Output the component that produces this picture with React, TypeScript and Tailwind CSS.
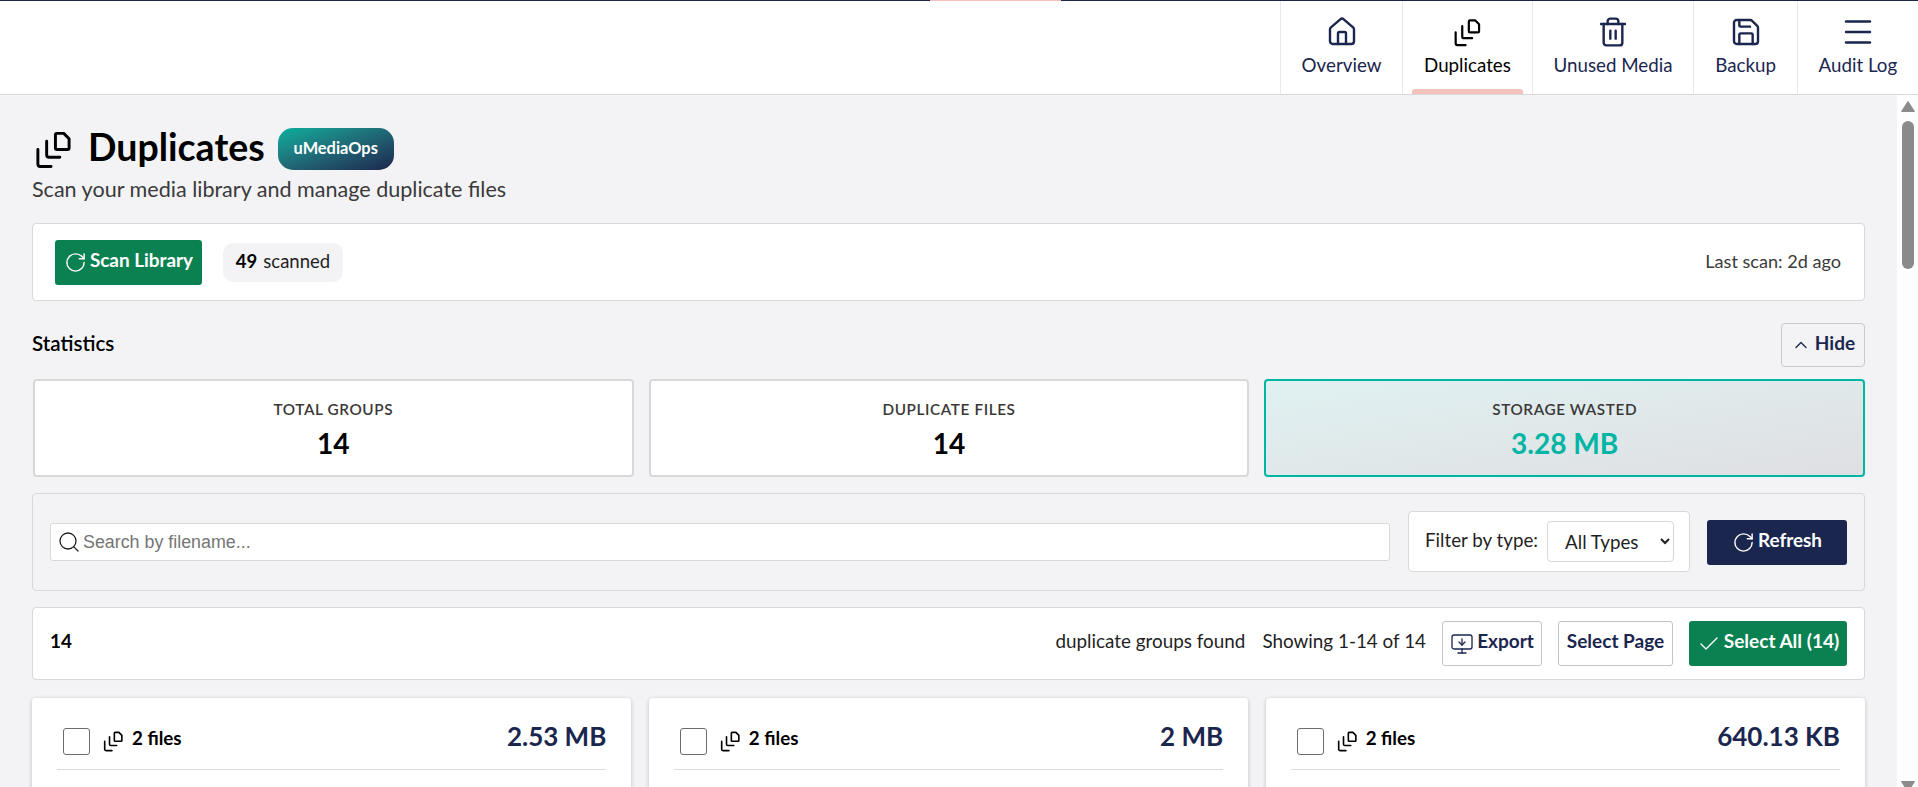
import { ChevronUp, Check, House, Menu, MonitorDown, RotateCw, Save, Search, Trash2 } from "lucide-react";
import type { ReactNode } from "react";

function DocsIcon({ className }: { className: string }) {
  return (
    <svg viewBox="0 0 40 41" fill="none" stroke="currentColor" strokeWidth="3" strokeLinecap="round" strokeLinejoin="round" className={className}>
      <path d="M24 4.5h7l5.5 5.5v9.5a1.5 1.5 0 0 1-1.5 1.5H24a1.5 1.5 0 0 1-1.5-1.5V6A1.5 1.5 0 0 1 24 4.5z" />
      <path d="M13.5 12.5v14a2.5 2.5 0 0 0 2.5 2.5h11" />
      <path d="M4.5 21v15A2.5 2.5 0 0 0 7 38.5h11" />
    </svg>
  );
}

function Tab({ icon, label, active }: { icon: ReactNode; label: string; active?: boolean }) {
  return (
    <div className={`relative flex h-full flex-col items-center border-l border-[#e9e9eb] px-[20.8px] pt-[16px] text-[18.75px] ${active ? "text-black" : "text-[#1b264f]"}`}>
      <div className="flex h-[30px] items-center">{icon}</div>
      <span className="mt-[6px] leading-[24px]">{label}</span>
      {active && <div className="absolute bottom-0 left-[9px] right-[9px] h-[5px] rounded-t-[3px] bg-[#f5c1bc]" />}
    </div>
  );
}

function StatCard({ label, value, accent }: { label: string; value: string; accent?: boolean }) {
  return (
    <div className={`flex h-[98px] flex-col items-center rounded-[4px] border-2 pt-[17px] ${accent ? "border-[#00b5a3] bg-gradient-to-br from-[#e0f1f1] to-[#dfdfe3]" : "border-[#d8d8d8] bg-white"}`}>
      <div className="text-[15.3px] font-semibold uppercase leading-[22px] tracking-[0.6px] text-[#3a3836]">{label}</div>
      <div className={`mt-[5px] text-[28.1px] font-bold leading-[36px] ${accent ? "text-[#00b5a3]" : "text-black"}`}>{value}</div>
    </div>
  );
}

function GroupCard({ size }: { size: string }) {
  return (
    <div className="h-[120px] rounded-[4px] bg-white px-[25px] pt-[26px] shadow-[0_1px_4px_rgba(0,0,0,0.22)]">
      <div className="flex h-[46px] items-start justify-between border-b border-[#dcdcdc]">
        <div className="flex items-center">
          <div className="ml-[6px] h-[27px] w-[27px] rounded-[3px] border border-[#6b6b6b] bg-white" />
          <DocsIcon className="ml-[12px] h-[22px] w-[22px] text-black" />
          <span className="mb-[6px] ml-[8px] text-[18.75px] font-bold text-black">2 files</span>
        </div>
        <span className="-mt-[2px] text-[26px] font-bold leading-[28px] text-[#1b264f]">{size}</span>
      </div>
    </div>
  );
}

export default function App() {
  return (
    <div className="flex h-screen w-full flex-col overflow-hidden bg-white font-['Lato',sans-serif]">
      <div className="flex h-[1px] shrink-0">
        <div className="w-[930px] bg-[#1b264f]" />
        <div className="w-[131px] bg-[#f5c1bc]" />
        <div className="flex-1 bg-[#1b264f]" />
      </div>

      <header className="flex h-[94px] shrink-0 justify-end border-b border-[#d8d8d8] bg-white">
        <Tab label="Overview" icon={<House className="h-[32px] w-[32px]" strokeWidth={1.8} />} />
        <Tab label="Duplicates" active icon={<DocsIcon className="h-[30px] w-[30px]" />} />
        <Tab label="Unused Media" icon={<Trash2 className="h-[32px] w-[32px]" strokeWidth={1.8} />} />
        <Tab label="Backup" icon={<Save className="h-[32px] w-[32px]" strokeWidth={1.8} />} />
        <Tab label="Audit Log" icon={<Menu className="h-[36px] w-[36px]" strokeWidth={1.6} />} />
      </header>

      <div className="flex min-h-0 flex-1">
        <main className="min-w-0 flex-1 overflow-hidden bg-[#f3f3f5] pl-[32px] pr-[32px] pt-[33px]">
          <div className="flex h-[42px] items-center">
            <DocsIcon className="ml-[1px] h-[40px] w-[40px] text-black" />
            <h1 className="mb-[4px] ml-[15px] text-[37.5px] font-bold leading-[42px] text-black">Duplicates</h1>
            <span className="ml-[13px] flex h-[42px] w-[116px] items-center justify-center rounded-[15px] bg-gradient-to-br from-[#00b09b] to-[#1b264f] text-[16.4px] font-bold text-white">
              <span className="mb-[2px]">uMediaOps</span>
            </span>
          </div>
          <p className="mt-[7px] text-[21.55px] leading-[24px] text-[#3a3a3a]">Scan your media library and manage duplicate files</p>

          <section className="mt-[22px] flex h-[78px] items-center justify-between rounded-[4px] border border-[#d8d8d8] bg-white pl-[22px] pr-[23px]">
            <div className="flex items-center">
              <button className="flex h-[45px] w-[147px] items-center justify-center gap-[3px] rounded-[3px] bg-[#0b8152] text-[18.9px] font-bold text-white">
                <RotateCw className="h-[23px] w-[23px]" strokeWidth={1.5} />
                <span className="mb-[3px]">Scan Library</span>
              </button>
              <div className="ml-[21px] flex h-[39px] w-[120px] items-center justify-center rounded-[10px] bg-[#f3f3f5] text-[18.5px] text-[#1f1f1f]">
                <b className="text-black">49</b>
                <span className="ml-[6px]">scanned</span>
              </div>
            </div>
            <span className="text-[18.1px] text-[#3a3a3a]">Last scan: 2d ago</span>
          </section>

          <div className="mt-[22px] flex h-[44px] items-center justify-between">
            <h2 className="mb-[4px] text-[20.6px] font-semibold text-black">Statistics</h2>
            <button className="flex h-[44px] w-[84px] items-center justify-center gap-[4px] rounded-[4px] border border-[#c8c8cc] text-[19px] font-bold text-[#1b264f]">
              <ChevronUp className="h-[20px] w-[20px]" strokeWidth={1.6} />
              <span className="mb-[3px]">Hide</span>
            </button>
          </div>

          <div className="ml-[1px] mt-[12px] grid grid-cols-3 gap-[15px]">
            <StatCard label="Total Groups" value="14" />
            <StatCard label="Duplicate Files" value="14" />
            <StatCard label="Storage Wasted" value="3.28 MB" accent />
          </div>

          <section className="mt-[16px] flex h-[98px] items-center rounded-[4px] border border-[#d8d8d8] bg-[#f3f3f5] pl-[17px] pr-[17px]">
            <div className="relative flex h-[38px] flex-1 items-center rounded-[3px] border border-[#d8d8d8] bg-white">
              <Search className="ml-[6px] h-[24px] w-[24px] text-[#1f1f1f]" strokeWidth={1.3} />
              <input placeholder="Search by filename..." className="ml-[2px] flex-1 bg-transparent font-['Liberation_Sans',sans-serif] text-[17.85px] outline-none placeholder:text-[#757575]" />
            </div>
            <div className="mb-[1px] ml-[18px] flex h-[61px] w-[282px] items-center rounded-[4px] border border-[#d8d8d8] bg-white pl-[16px]">
              <span className="mb-[3px] text-[18.75px] text-[#1f1f1f]">Filter by type:</span>
              <select className="ml-[9px] h-[41px] w-[127px] rounded-[4px] border border-[#d8d8d8] bg-white pl-[13px] text-[18.75px] text-[#1f1f1f]">
                <option>All Types</option>
              </select>
            </div>
            <button className="ml-[17px] flex h-[45px] w-[140px] items-center justify-center gap-[3px] rounded-[3px] bg-[#1b264f] text-[18.9px] font-bold text-white">
              <RotateCw className="h-[23px] w-[23px]" strokeWidth={1.5} />
              <span className="mb-[4px]">Refresh</span>
            </button>
          </section>

          <section className="mt-[16px] flex h-[73px] items-center rounded-[4px] border border-[#d8d8d8] bg-white pl-[17px] pr-[17px] text-[18.85px] text-[#1f1f1f]">
            <b className="mb-[5px] text-black">14</b>
            <span className="mb-[5px] ml-auto">duplicate groups found</span>
            <span className="mb-[5px] ml-[17px]">Showing 1-14 of 14</span>
            <button className="ml-[16px] flex h-[45px] w-[100px] items-center justify-center gap-[3px] rounded-[3px] border border-[#c4c4c8] text-[19px] font-bold text-[#1b264f]">
              <MonitorDown className="h-[24px] w-[24px]" strokeWidth={1.3} />
              <span className="mb-[4px]">Export</span>
            </button>
            <button className="ml-[16px] h-[45px] w-[115px] rounded-[3px] border border-[#c4c4c8] pb-[4px] text-[19px] font-bold text-[#1b264f]">Select Page</button>
            <button className="ml-[16px] flex h-[45px] w-[158px] items-center justify-center gap-[3px] rounded-[3px] bg-[#0b8152] text-[19px] font-bold text-white">
              <Check className="h-[24px] w-[24px]" strokeWidth={1.4} />
              <span className="mb-[4px]">Select All (14)</span>
            </button>
          </section>

          <div className="mt-[18px] grid grid-cols-3 gap-[17.5px]">
            <GroupCard size="2.53 MB" />
            <GroupCard size="2 MB" />
            <GroupCard size="640.13 KB" />
          </div>
        </main>

        <div className="flex w-[21px] shrink-0 flex-col items-center bg-[#fdfdfd]">
          <svg viewBox="0 0 14 11" className="mt-[6px] h-[11px] w-[14px] fill-[#8a8a8a]">
            <path d="M7 0.5 L13.5 10.5 H0.5 Z" stroke="#8a8a8a" strokeLinejoin="round" />
          </svg>
          <div className="mt-[9px] h-[148px] w-[12px] rounded-b-[6px] rounded-t-[6px] bg-[#8a8a8a]" />
          <div className="flex-1" />
          <svg viewBox="0 0 14 6" className="h-[6px] w-[14px] fill-[#8a8a8a]">
            <path d="M0.5 0.5 H13.5 L10 6 H4 Z" stroke="#8a8a8a" strokeLinejoin="round" />
          </svg>
        </div>
      </div>
    </div>
  );
}
